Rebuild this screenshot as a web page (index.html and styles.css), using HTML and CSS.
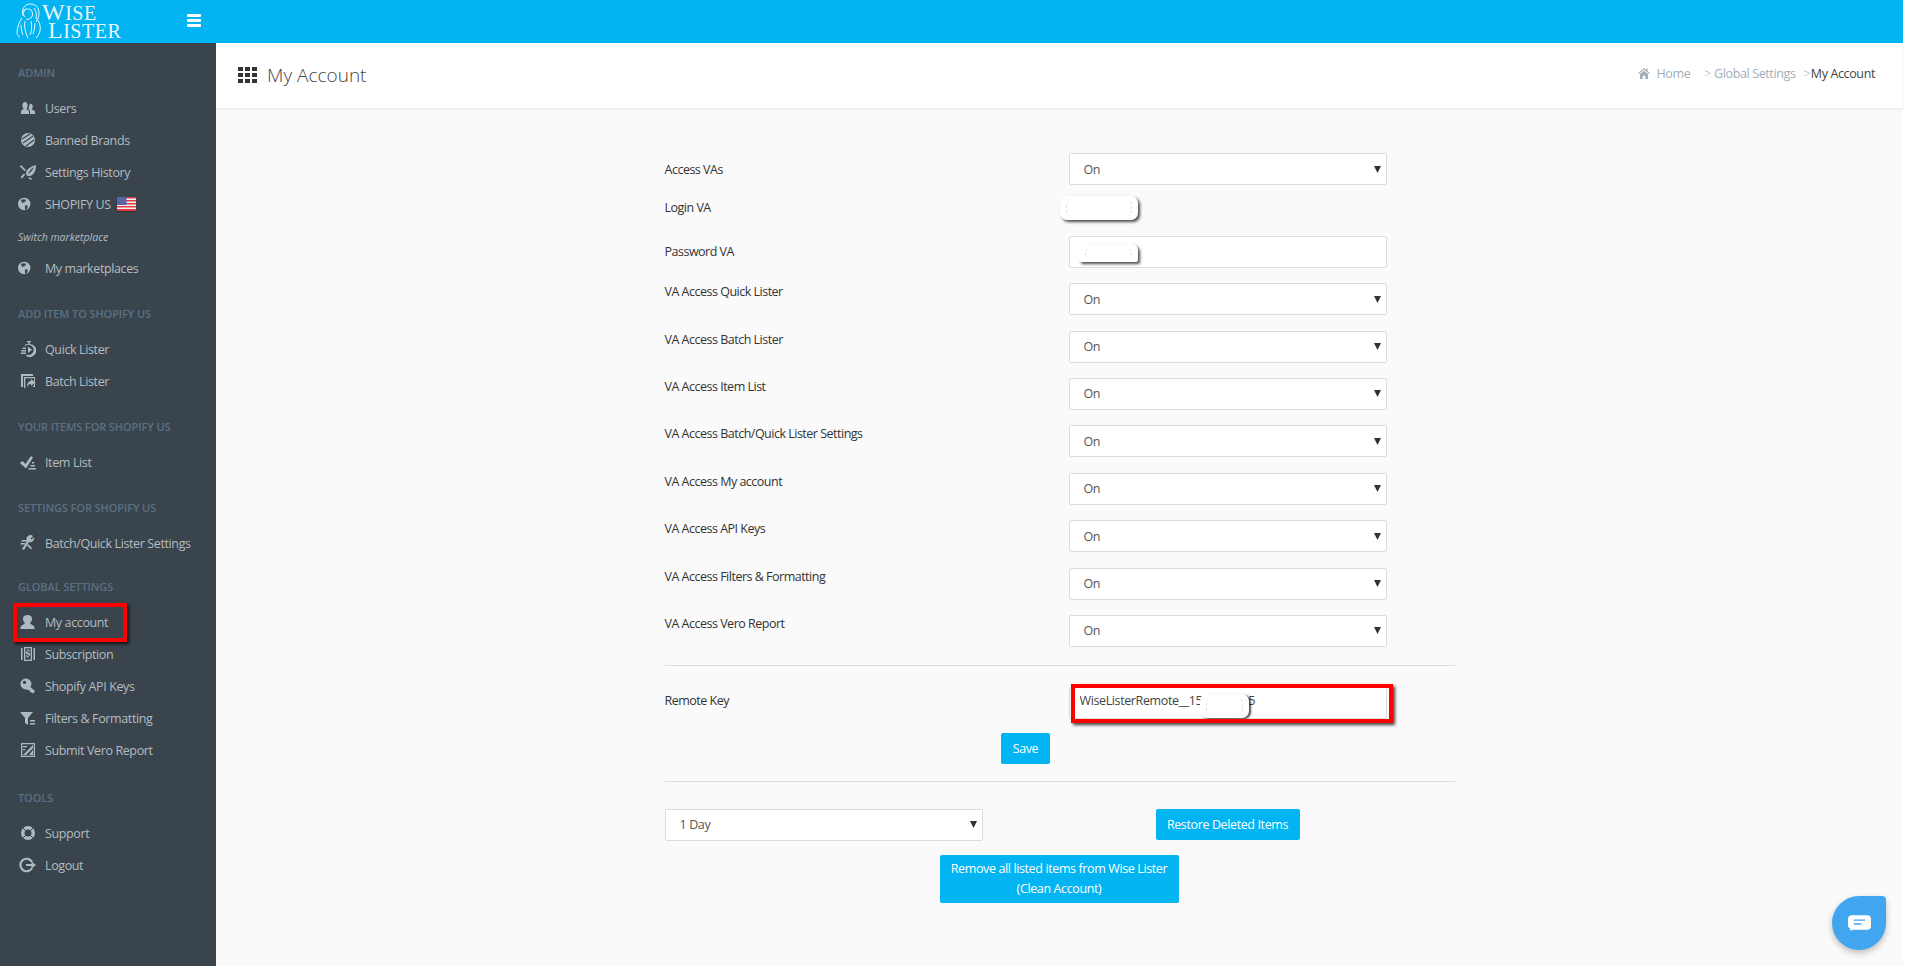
FILE: index.html
```html
<!DOCTYPE html>
<html lang="en">
<head>
    <meta charset="UTF-8">
    <title>My Account</title>
    <link rel="stylesheet" href="styles.css">
</head>
<body>
    <div class="page">
        <header class="topbar">
            <a class="logo">
                <svg class="logo-mark" viewBox="0 0 26 37" fill="none" stroke="#fff" stroke-width="0.9">
                    <path d="M7 13C5 6 9 1 14 1c5 0 9 3 9 9 0 5-2 7-3 9"/>
                    <path d="M6 9c2-3 6-4 9-2 2 2 2 6 0 8-2 1-4 2-5 1"/>
                    <path d="M9 7c-2 2-2 5 0 7"/>
                    <path d="M18 5c2 3 3 6 2 10 3 3 5 8 4 13-1 3-2 5-4 7"/>
                    <path d="M6 15c-3 4-5 10-5 15 0 2 2 4 3 4"/>
                    <path d="M9 18c-1 5 0 11 3 17M15 18c1 4 1 10-1 14M19 20c0 4-1 8-2 11M5 22c0 4 1 8 2 10"/>
                </svg>
                <span class="logo-text">
                    <span class="logo-line"><span class="logo-cap">W</span>ISE</span>
                    <span class="logo-line logo-second"><span class="logo-cap">L</span>ISTER</span>
                </span>
            </a>
            <span class="hamburger"><i></i><i></i><i></i></span>
        </header>

        <div class="layout">
            <nav class="sidebar">
                <div class="nav-title first">ADMIN</div>
                <a class="nav-item">
                    <svg viewBox="0 0 18 18"><path d="M3 15v-2.500c0-1.400 1.500-2 2.800-2.600-.9-.8-1.400-2-1.400-3.400C4.400 4.300 5.400 3 7 3s2.600 1.300 2.600 3.500c0 1.400-.5 2.600-1.400 3.400 1.300.6 2.800 1.200 2.800 2.600V15z"/><path d="M12 15v-2.500c0-1.200-.8-2-1.800-2.600.5-.5 1-1.600 1-3 0-1 .3-1.700.8-2.200 1.500-.3 2.800.8 2.800 2.700 0 1.300-.4 2.300-1.100 3 1.200.5 3.300 1 3.300 2.300V15z"/></svg>
                    Users
                </a>
                <a class="nav-item">
                    <svg viewBox="0 0 18 18"><circle cx="10" cy="9" r="7"/><path d="M4 8l8-5M5 12l10-7M8 15l8-6" stroke="#3a444c" stroke-width="1.200" fill="none"/></svg>
                    Banned Brands
                </a>
                <a class="nav-item">
                    <svg viewBox="0 0 18 18"><path d="M8 11c0-5 4-7 10-9 0 5-2 10-6 11-1.500.3-3 0-4-2zm2 0c2-1 4-3 6-7-3 2-5 4-6 7z" fill-rule="evenodd"/><path d="M3 2l5 5-1.200 1.200-5-5zM6 10.500l1.200 1.200L4 15.500l-1.500-1.500zM10 14.500c2 0 3 .2 4.500 1.500-1.500 1-3 .8-4.500-1.500z"/></svg>
                    Settings History
                </a>
                <a class="nav-item">
                    <svg viewBox="0 0 18 18"><circle class="globe" cx="6.200" cy="9" r="6.200"/><path d="M3 5c2-1 4-1 5 0l-1 2-3 1zM7 10l3 1-1 3-2 1z" fill="#3a444c"/></svg>
                    SHOPIFY US
                    <svg class="flag" viewBox="0 0 19 15">
                        <rect width="19" height="14" fill="#f4f4f6"/>
                        <path d="M0 0h19v1.500H0zM0 3h19v1.500H0zM0 6h19v1.500H0zM0 9h19v1.500H0zM0 12h19v2H0z" fill="#e0393f"/>
                        <rect width="9.500" height="8" fill="#5a62a8"/>
                        <rect y="14" width="19" height="1" fill="#2a3035"/>
                    </svg>
                </a>
                <div class="nav-note">Switch marketplace</div>
                <a class="nav-item">
                    <svg viewBox="0 0 18 18"><circle class="globe" cx="6.200" cy="9" r="6.200"/><path d="M3 5c2-1 4-1 5 0l-1 2-3 1zM7 10l3 1-1 3-2 1z" fill="#3a444c"/></svg>
                    My marketplaces
                </a>

                <div class="nav-title">ADD ITEM TO SHOPIFY US</div>
                <a class="nav-item">
                    <svg viewBox="0 0 18 18"><path d="M9 1h4v1.300h-1.300V4A6.500 6.500 0 1 1 8 15.800l.5-1.300A5 5 0 1 0 7.500 6L6.700 5A6.500 6.500 0 0 1 10.300 4V2.300H9z"/><path d="M10 6.500l4 3.200-4 3.200zM5 7.500h3v1.500H4.400zM3.700 10h4.300v1.500H3zM3 12.500h5V14H2.500z"/></svg>
                    Quick Lister
                </a>
                <a class="nav-item">
                    <svg viewBox="0 0 18 18"><path d="M3 2h12v2H5v11H3z"/><path d="M6 5h11v10h-2v-1l1 0V6.300H7.300V16H6z"/><path d="M9 15c0-4 2-6 4-6V7l4 3.500L13 14v-2c-2 0-3 1-4 3z"/></svg>
                    Batch Lister
                </a>

                <div class="nav-title">YOUR ITEMS FOR SHOPIFY US</div>
                <a class="nav-item">
                    <svg viewBox="0 0 18 18"><path d="M2 10l2.500-2 3 3 5.500-8 2 1.500-7 11z"/><path d="M14 9h2v1.500h-2zM12.500 12H17v1.500h-4.500zM10.500 15H18v1.500h-7.500z"/></svg>
                    Item List
                </a>

                <div class="nav-title">SETTINGS FOR SHOPIFY US</div>
                <a class="nav-item">
                    <svg viewBox="0 0 18 18"><path d="M15 2l-2.500 2.500 1 1L16 3a4 4 0 0 1-5 5L6 16l-2-1 5-8a4 4 0 0 1 6-5z"/><path d="M4 6h5v1.500H3zM3 9h4v1.500H2zM10 10l4 4-1 1.500-4-4z"/></svg>
                    Batch/Quick Lister Settings
                </a>

                <div class="nav-title nav-global">GLOBAL SETTINGS</div>
                <a class="nav-item">
                    <svg viewBox="0 0 18 18"><path d="M2.500 16v-1.500c0-2 4-3 4.500-4.500-1.300-1-2-2.500-2-4.500C5 3.200 6.800 2 9.500 2S14 3.200 14 5.500c0 2-.7 3.500-2 4.500.5 1.500 4.500 2.500 4.500 4.500V16z"/></svg>
                    My account
                </a>
                <a class="nav-item">
                    <svg viewBox="0 0 18 18"><path d="M3 3h1.500v12H3zM15.500 3H17v12h-1.500z"/><path d="M6 2h8v14H6zM7.300 3.300v11.400h5.400V3.300z" fill-rule="evenodd"/><path d="M9.500 4h1v1.200c.8 0 1.300.3 1.500.5l-.4 1a3 3 0 0 0-1.700-.5c-.7 0-.9.300-.9.500 0 .8 3.200.7 3.200 2.700 0 .9-.6 1.600-1.700 1.800V13h-1v-1.200c-.8 0-1.500-.3-1.800-.5l.4-1c.5.300 1.200.5 1.900.5.600 0 1-.3 1-.6 0-.9-3.200-.7-3.200-2.700 0-.9.600-1.600 1.700-1.700z"/></svg>
                    Subscription
                </a>
                <a class="nav-item">
                    <svg viewBox="0 0 18 18"><path d="M8 1.500a5.500 5.500 0 1 1-.1 11 5.500 5.500 0 0 1 .1-11zM6.500 3.700a1.700 1.700 0 1 0 0 3.400 1.700 1.700 0 0 0 0-3.400z" fill-rule="evenodd"/><path d="M10 8l7 6-1.800 2.500-2-1.200-1-.3-.5-1.500-1.700-.5-2-2z"/></svg>
                    Shopify API Keys
                </a>
                <a class="nav-item">
                    <svg viewBox="0 0 18 18"><path d="M2 3h13l-5 6v7l-3-2V9zM12 11h5v1.500h-5zM12 14h5v1.500h-5z"/></svg>
                    Filters &amp; Formatting
                </a>
                <a class="nav-item">
                    <svg viewBox="0 0 18 18"><path d="M3 2h14v14H3zm1.300 1.300v11.400h11.400V3.300z" fill-rule="evenodd"/><path d="M5 14L15 4v3l-7 7zM5 5h4v1.300H5zM5 8h2v1.300H5zM11 14l4-5v5z"/></svg>
                    Submit Vero Report
                </a>

                <div class="nav-title nav-tools">TOOLS</div>
                <a class="nav-item">
                    <svg viewBox="0 0 18 18"><path d="M10 2a7 7 0 1 1 0 14 7 7 0 0 1 0-14zm0 3.500a3.500 3.500 0 1 0 0 7 3.500 3.500 0 0 0 0-7z" fill-rule="evenodd"/><path d="M5 4l2.600 2.600M15 4l-2.600 2.600M5 14l2.600-2.600M15 14l-2.600-2.600" stroke="#3a444c"/></svg>
                    Support
                </a>
                <a class="nav-item">
                    <svg viewBox="0 0 18 18"><path d="M15 5.500A7.300 7.300 0 1 0 15 12.500l-1.700-1A5.200 5.200 0 1 1 13.300 6.500z"/><path d="M8 8h5.500V5.500L18 9l-4.500 3.500V10H8z"/></svg>
                    Logout
                </a>
            </nav>

            <main class="main">
                <div class="page-head">
                    <h1 class="page-title"><span class="grid-icon"><i></i><i></i><i></i><i></i><i></i><i></i><i></i><i></i><i></i></span>My Account</h1>
                    <div class="breadcrumb">
                        <svg class="home-icon" viewBox="0 0 12 11"><path d="M6 0l2 1.700V.6h1.500v2.400L12 5.300l-.7.700L6 1.500.7 6 0 5.300zM2 6l4-3.300L10 6v5H7.300V7.800H4.700V11H2z"/></svg>
                        <span class="crumb-home">Home</span>
                        <span class="crumb-sep">&gt;</span><span>Global Settings</span>
                        <span class="crumb-sep">&gt;</span><span class="crumb-now">My Account</span>
                    </div>
                </div>

                <form class="account-form">
                    <div class="row">
                        <label class="mid">Access VAs</label>
                        <select><option>On</option><option>Off</option></select>
                    </div>
                    <div class="row row-login">
                        <label>Login VA</label>
                        <div class="field-wrap"><span class="redact redact-login"></span></div>
                    </div>
                    <div class="row">
                        <label class="mid">Password VA</label>
                        <div class="field-wrap">
                            <input type="text">
                            <span class="redact redact-pass"></span>
                        </div>
                    </div>
                    <div class="row"><label>VA Access Quick Lister</label><select><option>On</option><option>Off</option></select></div>
                    <div class="row"><label>VA Access Batch Lister</label><select><option>On</option><option>Off</option></select></div>
                    <div class="row"><label>VA Access Item List</label><select><option>On</option><option>Off</option></select></div>
                    <div class="row"><label>VA Access Batch/Quick Lister Settings</label><select><option>On</option><option>Off</option></select></div>
                    <div class="row"><label>VA Access My account</label><select><option>On</option><option>Off</option></select></div>
                    <div class="row"><label>VA Access API Keys</label><select><option>On</option><option>Off</option></select></div>
                    <div class="row"><label>VA Access Filters &amp; Formatting</label><select><option>On</option><option>Off</option></select></div>
                    <div class="row"><label>VA Access Vero Report</label><select><option>On</option><option>Off</option></select></div>

                    <hr class="rule-top">

                    <div class="row row-key">
                        <label>Remote Key</label>
                        <div class="field-wrap">
                            <input class="key-input" type="text" value="WiseListerRemote__15                5">
                            <span class="redact redact-key"></span>
                            <span class="mark mark-key"></span>
                        </div>
                    </div>
                    <div class="save-line"><button type="button" class="btn btn-save">Save</button></div>

                    <hr class="rule-bottom">

                    <div class="restore-line">
                        <select class="days"><option>1 Day</option><option>7 Days</option></select>
                        <button type="button" class="btn btn-restore">Restore Deleted Items</button>
                    </div>
                    <div class="clean-line">
                        <button type="button" class="btn btn-clean">Remove all listed items from Wise Lister<br>(Clean Account)</button>
                    </div>
                </form>

                <a class="chat-btn">
                    <svg viewBox="0 0 24 16"><path d="M4 0h16a4 4 0 0 1 4 4v7a4 4 0 0 1-4 4H5l-3 1 .5-2A4 4 0 0 1 0 11V4a4 4 0 0 1 4-4z" fill="#fff"/><path d="M6 5h12M6 9h8" stroke="#42a5f0" stroke-width="1.500"/></svg>
                </a>
            </main>
        </div>
        <span class="mark mark-nav"></span>
    </div>
</body>
</html>
```

FILE: styles.css
```css
* {
    box-sizing: border-box;
}
html, body {
    height: 100%;
    margin: 0;
    overflow: hidden;
    background-color: #fff;
}
body {
    font-family: "Open Sans", Arial, sans-serif;
    font-size: 12.5px;
    letter-spacing: -0.38px;
    color: #333;
}
.page {
    position: relative;
    width: calc(100% - 2px);
    height: 100%;
    display: flex;
    flex-direction: column;
}

/* top bar */
.topbar {
    height: 43px;
    flex: none;
    background-color: #02b4f2;
    display: flex;
    align-items: flex-start;
}
.logo {
    width: 187px;
    display: flex;
    padding: 3px 0 0 16px;
    color: rgba(255,255,255,0.92);
}
.logo-mark {
    width: 26px;
    height: 37px;
    flex: none;
}
.logo-text {
    display: flex;
    flex-direction: column;
    font-family: "Liberation Serif", serif;
    font-size: 20px;
    letter-spacing: 0.5px;
}
.logo-line {
    display: block;
    height: 18px;
    line-height: 18px;
}
.logo-cap {
    font-size: 24px;
}
.logo-second {
    margin-left: 6px;
}
.hamburger {
    margin-top: 14px;
    width: 14px;
    display: flex;
    flex-direction: column;
    gap: 2px;
}
.hamburger i {
    display: block;
    height: 3px;
    border-radius: 1px;
    background-color: #fff;
}

/* sidebar */
.layout {
    flex: 1;
    display: flex;
    min-height: 0;
}
.sidebar {
    width: 216px;
    flex: none;
    background-color: #3a444c;
    padding: 20px 0 0 18px;
}
.nav-title {
    height: 20px;
    line-height: 20px;
    margin: 20px 0 9px;
    font-size: 11px;
    font-weight: 600;
    letter-spacing: -0.1px;
    color: #5b7085;
}
.nav-title.first {
    margin-top: 0;
}
.nav-title.nav-global {
    margin-top: 18px;
}
.nav-title.nav-tools {
    margin-top: 22px;
}
.nav-item {
    height: 32px;
    display: flex;
    align-items: center;
    color: #b3bcc3;
    white-space: nowrap;
}
.nav-item svg {
    width: 18px;
    height: 18px;
    flex: none;
    margin-right: 9px;
    fill: #aeb9c1;
}
.nav-item svg.flag {
    width: 19px;
    height: 15px;
    margin: 0 0 0 6px;
}
.nav-note {
    height: 32px;
    line-height: 34px;
    font-size: 10.5px;
    font-style: italic;
    letter-spacing: 0;
    color: #b3bcc3;
}

/* page header */
.main {
    position: relative;
    flex: 1;
    min-width: 0;
    background-color: #fafafa;
}
.page-head {
    height: 65px;
    background-color: #fff;
    box-shadow: 0 1px 3px rgba(0,0,0,0.08);
    display: flex;
    align-items: center;
    justify-content: space-between;
    padding: 0 28px 2px 22px;
}
.page-title {
    margin: 0;
    display: flex;
    align-items: center;
    font-size: 19px;
    font-weight: 300;
    letter-spacing: 0;
    color: #444;
}
.grid-icon {
    width: 19px;
    display: grid;
    grid-template-columns: repeat(3, 5px);
    gap: 2px;
    margin-right: 10px;
}
.grid-icon i {
    height: 4px;
    background-color: #333;
}
.breadcrumb {
    display: flex;
    align-items: center;
    margin-bottom: 2px;
    color: #a2adb8;
}
.home-icon {
    width: 12px;
    height: 11px;
    fill: #a2adb8;
    margin-right: 7px;
}
.crumb-home {
    margin-right: 14px;
}
.crumb-sep {
    margin-right: 3px;
    font-weight: 300;
}
.crumb-sep + span + .crumb-sep {
    margin: 0 0.6px 0 8px;
}
.crumb-now {
    color: #444;
}

/* form */
.account-form {
    width: 790px;
    margin: 45px auto 0;
}
.row {
    display: grid;
    grid-template-columns: 404px 318px;
    height: 32px;
    margin-bottom: 15.4px;
}
.row-login {
    height: 20px;
}
.row-login label {
    margin-top: -1px;
}
label {
    line-height: 18px;
    font-weight: 500;
    letter-spacing: -0.5px;
    color: #333;
}
label.mid {
    align-self: center;
    padding-top: 1px;
}
select, input {
    width: 100%;
    height: 32px;
    border: 1px solid #ddd;
    border-radius: 2px;
    background-color: #fff;
    font-family: "Open Sans", Arial, sans-serif;
    font-size: 12.5px;
    letter-spacing: -0.38px;
    color: #555;
    padding: 0 14px;
}
select {
    appearance: none;
    background-image: url("data:image/svg+xml,%3Csvg xmlns='http://www.w3.org/2000/svg' width='7' height='7'%3E%3Cpath d='M0 0h7L3.500 7z' fill='%23333'/%3E%3C/svg%3E");
    background-repeat: no-repeat;
    background-position: right 5px center;
}
.field-wrap {
    position: relative;
}
.redact {
    position: absolute;
    background-color: #fff;
    border-radius: 7px;
    box-shadow: 2px 2px 3px rgba(0,0,0,0.7);
}
.redact::before {
    content: "";
    position: absolute;
    inset: 4px 6px;
    border-left: 1px dashed #ddd;
    border-right: 1px dashed #ddd;
    border-radius: 5px;
}
.redact-login {
    left: -9px;
    top: -4px;
    width: 78px;
    height: 24px;
}
.redact-pass {
    left: 10px;
    top: 8px;
    width: 59px;
    height: 18px;
    border-radius: 8px 6px 2px 2px;
}
.redact-key {
    left: 131px;
    top: 7px;
    width: 49px;
    height: 24px;
    box-shadow: 2px 1px 2px rgba(0,0,0,0.7);
}
.mark {
    position: absolute;
    border: 4px solid #f00;
    box-shadow: 2px 2px 3px rgba(0,0,0,0.75);
}
.mark-key {
    left: 2px;
    top: -3px;
    width: 322px;
    height: 39px;
}
.mark-nav {
    left: 13px;
    top: 603px;
    width: 114px;
    height: 39px;
}
.key-input {
    padding: 0 0 4px 10px;
    color: #444;
}
hr {
    border: none;
    border-top: 1px solid #ddd;
    margin: 0;
}
.rule-top {
    margin: 18px 0 21px;
}
.row-key {
    margin-bottom: 14px;
}
.row-key label {
    padding-top: 5px;
}
.save-line {
    display: flex;
    justify-content: center;
    padding-right: 68px;
}
.btn {
    height: 31px;
    padding: 0;
    border: none;
    border-radius: 2px;
    background-color: #02b4f2;
    color: #fff;
    font-family: "Open Sans", Arial, sans-serif;
    font-size: 12.5px;
    letter-spacing: -0.38px;
    white-space: nowrap;
}
.btn-save {
    width: 49px;
}
.btn-restore {
    width: 144px;
}
.rule-bottom {
    margin: 17px 0 27px;
}
.restore-line {
    display: grid;
    grid-template-columns: 318px auto;
    justify-content: start;
    column-gap: 173px;
}
.days {
    height: 32px;
}
.clean-line {
    margin-top: 14px;
    padding-left: 275px;
}
.btn-clean {
    width: 239px;
    height: 48px;
    line-height: 20px;
}

/* chat bubble */
.chat-btn {
    position: absolute;
    left: 1616px;
    top: 853px;
    width: 54px;
    height: 54px;
    border-radius: 50% 4px 50% 50%;
    background-color: #42a5f0;
    box-shadow: 0 3px 6px rgba(0,0,0,0.25);
    display: flex;
    align-items: center;
    justify-content: center;
}
.chat-btn svg {
    width: 23px;
    height: 16px;
}
```
